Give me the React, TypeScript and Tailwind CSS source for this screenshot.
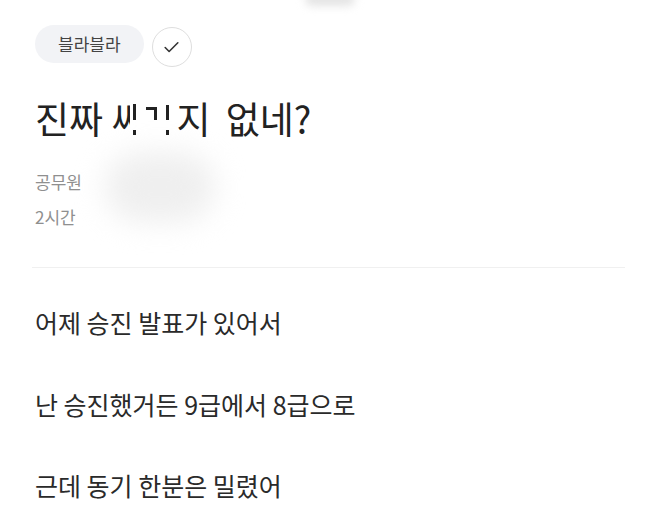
import { Check } from "lucide-react";

const LINES = [
  "어제 승진 발표가 있어서",
  "난 승진했거든 9급에서 8급으로",
  "근데 동기 한분은 밀렸어",
];

// the half-erased word in the title
function Censored() {
  return (
    <span className="inline-flex h-[44px] align-top">
      <span className="block w-[19px] overflow-hidden leading-[44px]">싸</span>
      <span className="flex flex-col items-center w-[8px] pt-[8px]">
        <span className="w-[3px] h-[16px] bg-[#222]" />
        <span className="mt-[10px] w-[3px] h-[5px] bg-[#222]" />
      </span>
      <span className="flex w-[24px] pt-[11px] pl-[8px]">
        <span className="w-[11px] h-[13px] border-t-[3px] border-r-[3px] border-[#222]" />
      </span>
      <span className="flex flex-col w-[14px] pt-[9px] pl-[4px]">
        <span className="w-[3px] h-[15px] bg-[#222]" />
        <span className="mt-[10px] w-[3px] h-[5px] bg-[#222]" />
      </span>
    </span>
  );
}

export default function App() {
  return (
    <div
      className="relative w-[650px] h-[519px] overflow-hidden bg-white text-[#222]"
      style={{ fontFamily: '"Noto Sans CJK KR", "Noto Sans", sans-serif' }}
    >
      {/* blurred bits from the capture */}
      <div className="absolute left-[305px] top-[-8px] w-[50px] h-[14px] rounded-full bg-[#e4e4e4] blur-[4px]" />
      <div className="absolute left-[105px] top-[152px] w-[110px] h-[70px] rounded-full bg-[#efefef] blur-[14px]" />

      <div className="relative px-[35px] pt-[25px]">
        {/* Tags */}
        <div className="flex items-start gap-[8px]">
          <span className="h-[38px] px-[23px] flex items-center rounded-full bg-[#f2f3f6] text-[17px] text-[#444]">
            블라블라
          </span>
          <span className="mt-[2px] w-[40px] h-[40px] rounded-full border border-[#dedede] flex items-center justify-center">
            <Check className="w-[19px] h-[19px] text-[#333]" strokeWidth={2} />
          </span>
        </div>

        {/* Title */}
        <h1 className="mt-[29px] text-[37px] leading-[44px] font-normal">
          진짜 <Censored />지 <span className="ml-[7px]">없네?</span>
        </h1>

        {/* Meta */}
        <div className="mt-[31px] flex flex-col gap-[13px] text-[17px] leading-[22px] text-[#8f8f8f]">
          <span>공무원</span>
          <span>2시간</span>
        </div>

        <div className="mt-[39px] ml-[-3px] mr-[-10px] h-px bg-[#f0f0f0]" />

        {/* Body */}
        <div className="mt-[38px] flex flex-col gap-[49.5px] text-[25px] leading-[32px] text-[#2a2a2a]">
          {LINES.map((l) => (
            <p key={l}>{l}</p>
          ))}
        </div>
      </div>
    </div>
  );
}
